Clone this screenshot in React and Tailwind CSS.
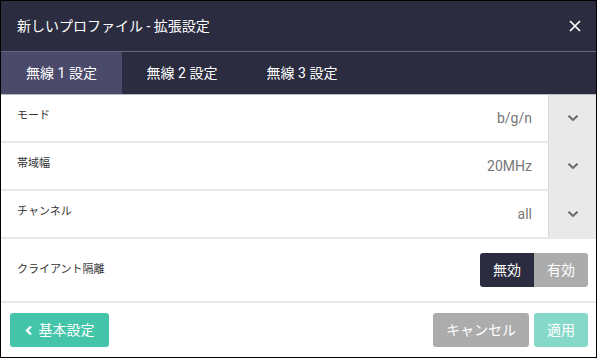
import React from "react";

const font = { fontFamily: 'Roboto, "Noto Sans CJK JP", sans-serif' };

function Chevron() {
  return (
    <svg width="12" height="8" viewBox="0 0 12 8" fill="none">
      <path d="M1.5 1.8 L6 6 L10.5 1.8" stroke="#666" strokeWidth="2" />
    </svg>
  );
}

function SelectRow({ label, value }) {
  return (
    <div className="flex h-[48px] items-stretch border-b-2 border-[#e8e8e8] bg-white">
      <div className="flex flex-1 items-center pl-4 pb-[4px] text-[11px] text-[#333]">{label}</div>
      <div className="flex items-center pr-4 text-[14px] text-[#777]">{value}</div>
      <div className="flex w-[48px] items-center justify-center border-l border-[#d8d8d8] bg-[#e9e9e9]">
        <Chevron />
      </div>
    </div>
  );
}

export default function App() {
  return (
    <div className="w-[597px] h-[358px] border border-black bg-white flex flex-col" style={font}>
      <div className="flex h-[50px] items-center justify-between bg-[#2b2c40] pl-4 pr-[15px]">
        <span className="text-[14px] text-white">新しいプロファイル - 拡張設定</span>
        <svg width="12" height="12" viewBox="0 0 12 12">
          <path d="M1 1 L11 11 M11 1 L1 11" stroke="white" strokeWidth="1.7" />
        </svg>
      </div>
      <div className="h-px bg-[#66677a]" />
      <div className="flex h-[43px] border-b border-[#b9b9c2] bg-[#2b2c40]">
        <div className="flex w-[121px] items-center justify-center bg-[#4b4a6b] text-[14px] text-white">無線 1 設定</div>
        <div className="flex w-[120px] items-center justify-center text-[14px] text-white">無線 2 設定</div>
        <div className="flex w-[120px] items-center justify-center text-[14px] text-white">無線 3 設定</div>
      </div>
      <SelectRow label="モード" value="b/g/n" />
      <SelectRow label="帯域幅" value="20MHz" />
      <SelectRow label="チャンネル" value="all" />
      <div className="flex h-[64px] items-center justify-between border-b-2 border-[#e8e8e8] pl-4 pr-2">
        <span className="text-[11px] text-[#333]">クライアント隔離</span>
        <div className="flex h-[34px] overflow-hidden rounded-[3px] text-[14px] text-white">
          <div className="flex w-[54px] items-center justify-center bg-[#2b2c40]">無効</div>
          <div className="flex w-[54px] items-center justify-center bg-[#acacac]">有効</div>
        </div>
      </div>
      <div className="flex flex-1 items-center justify-between pl-[9px] pr-2">
        <button className="flex h-[34px] w-[99px] items-center justify-center gap-[6px] rounded-[3px] bg-[#44c4a9] text-[14px] text-white">
          <svg width="8" height="11" viewBox="0 0 8 11" fill="none">
            <path d="M6 1.5 L2 5.5 L6 9.5" stroke="white" strokeWidth="2.4" />
          </svg>
          基本設定
        </button>
        <div className="flex gap-[5px]">
          <button className="flex h-[34px] w-[96px] items-center justify-center rounded-[3px] bg-[#acacac] text-[14px] text-white">キャンセル</button>
          <button className="flex h-[34px] w-[54px] items-center justify-center rounded-[3px] bg-[#86d9c8] text-[14px] text-white">適用</button>
        </div>
      </div>
    </div>
  );
}
